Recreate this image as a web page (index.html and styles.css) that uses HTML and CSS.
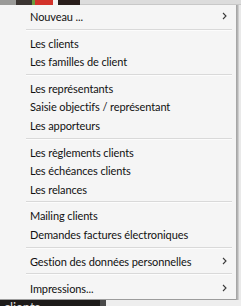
FILE: index.html
```html
<!DOCTYPE html>
<html lang="fr">
<head>
    <meta charset="UTF-8">
    <title>Menu clients</title>
    <link rel="stylesheet" href="styles.css">
</head>
<body>
<div class="backdrop-top">
    <span class="seg gray"></span>
    <span class="seg dark"></span>
    <span class="seg green"></span>
    <span class="seg red"></span>
    <span class="seg white"></span>
    <span class="seg dark2"></span>
    <span class="seg light"></span>
</div>

<div class="menu-row">
    <ul class="menu">
        <li class="item">Nouveau ...<svg class="chev" viewBox="0 0 5 8"><path d="M1 1l3 3-3 3"/></svg></li>
        <li class="sep"></li>
        <li class="item">Les clients</li>
        <li class="item">Les familles de client</li>
        <li class="sep"></li>
        <li class="item">Les représentants</li>
        <li class="item">Saisie objectifs / représentant</li>
        <li class="item">Les apporteurs</li>
        <li class="sep"></li>
        <li class="item">Les règlements clients</li>
        <li class="item">Les échéances clients</li>
        <li class="item">Les relances</li>
        <li class="sep"></li>
        <li class="item">Mailing clients</li>
        <li class="item">Demandes factures électroniques</li>
        <li class="sep"></li>
        <li class="item">Gestion des données personnelles<svg class="chev" viewBox="0 0 5 8"><path d="M1 1l3 3-3 3"/></svg></li>
        <li class="sep"></li>
        <li class="item">Impressions...<svg class="chev" viewBox="0 0 5 8"><path d="M1 1l3 3-3 3"/></svg></li>
    </ul>
    <div class="shadow"></div>
</div>

<div class="backdrop-bottom">
    <div class="tile"><span>clients</span></div>
    <div class="rest"></div>
</div>
</body>
</html>
```

FILE: styles.css
```css
body {
    margin: 0;
    padding: 0;
    width: 241px;
    height: 306px;
    overflow: hidden;
    background: #e9e9e9;
    font-family: Lato, "Noto Sans", sans-serif;
    font-size: 11px;
    letter-spacing: -0.1px;
    color: #111;
}

.backdrop-top {
    display: flex;
    height: 5px;
}

.seg { display: block; height: 100%; }
.seg.gray { width: 16px; background: #9a9a98; }
.seg.dark { width: 16px; background: #3b3532; }
.seg.green { width: 3px; background: #6b9a3c; }
.seg.red { width: 18px; background: #d2322a; }
.seg.white { width: 5px; background: #f2f2f2; }
.seg.dark2 { width: 22px; background: #2a1e1c; }
.seg.light { flex: 1; background: #dcdcdc; border-bottom: 1px solid #c8c8c8; box-sizing: border-box; }

.menu-row {
    display: flex;
    height: 295px;
}

.menu {
    list-style: none;
    margin: 0;
    padding: 2px 0 0;
    width: 236px;
    box-sizing: border-box;
    background: #f5f5f5;
    border-bottom: 1px solid #9c9c9c;
}

.shadow {
    width: 3px;
    background: linear-gradient(to right, #a0a0a0, #b8b8b8 60%, #dcdcdc);
}

.item {
    display: flex;
    align-items: center;
    height: 18.5px;
    padding-left: 30px;
    padding-right: 9px;
    white-space: nowrap;
}

.chev {
    margin-left: auto;
    width: 5px;
    height: 8px;
    fill: none;
    stroke: #3a3a3a;
    stroke-width: 1.1;
}

.sep {
    height: 1px;
    margin: 3px 4px 3.3px 26px;
    background: #d9d9d9;
    border-bottom: 1px solid #fcfcfc;
}

.backdrop-bottom {
    display: flex;
    height: 6px;
}

.backdrop-bottom .tile {
    width: 100px;
    background: #1d1a19;
    overflow: hidden;
}

.backdrop-bottom .tile span {
    display: block;
    padding: 1px 0 0 4px;
    color: #d8d8d8;
    font-size: 13px;
    line-height: 13px;
}

.backdrop-bottom .rest {
    flex: 1;
    background: #eeeeee;
    border-left: 6px solid #4a4a4a;
}
```
